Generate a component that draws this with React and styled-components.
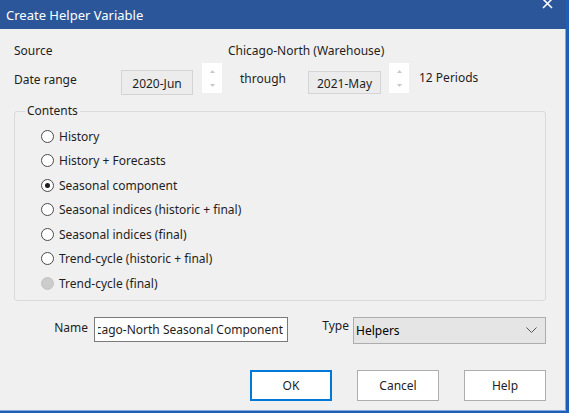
import React from "react";
import styled, { createGlobalStyle } from "styled-components";

const Global = createGlobalStyle`
  html, body { margin: 0; padding: 0; background: #f0f0f0; }
  body { font-family: "Noto Sans", "Open Sans", sans-serif; font-size: 12px; color: #1e1e1e; }
  * { box-sizing: border-box; }
`;

const Window = styled.div`
  width: 569px;
  height: 413px;
  background: #f0f0f0;
  display: flex;
  flex-direction: column;
  border-right: 3px solid #1f5fb6;
  border-bottom: 2px solid #1f5fb6;
  box-shadow: inset -1px -1px 0 #7fa9df;
  overflow: hidden;
`;

const TitleBar = styled.div`
  height: 29px;
  flex: none;
  background: #2b579a;
  color: #fff;
  display: flex;
  align-items: center;
  justify-content: space-between;
  padding: 0 16px 0 6px;
  margin-right: -3px;
  font-size: 13px;
`;

const CloseX = styled.svg`
  align-self: flex-start;
  margin-top: -1px;
`;

const Body = styled.div`
  flex: 1;
  padding: 14px 20px 0 14px;
  display: flex;
  flex-direction: column;
`;

const InfoRow = styled.div`
  display: flex;
  align-items: center;
  height: 16px;
  line-height: 16px;
`;

const Label = styled.span`
  width: ${p => p.$w || "auto"};
  flex: none;
  margin-top: ${p => p.$mt || "0px"};
  line-height: 16px;
`;

const DateRow = styled.div`
  display: flex;
  align-items: flex-start;
  margin-top: 4px;
  height: 32px;
`;

const DateBox = styled.div`
  margin-top: ${p => p.$mt};
  width: ${p => p.$w};
  height: ${p => p.$h};
  border: 1px solid #d4d4d4;
  background: #ececec;
  display: flex;
  align-items: center;
  justify-content: center;
  padding-top: 1px;
  flex: none;
`;

const Spinner = styled.div`
  width: 20px;
  height: 30px;
  margin-left: ${p => p.$ml};
  margin-right: ${p => p.$mr};
  background: #fff;
  display: flex;
  flex-direction: column;
  align-items: center;
  justify-content: space-between;
  padding: 7px 0 6px;
  flex: none;
`;

const Group = styled.fieldset`
  margin: 8px 0 0 0;
  padding: 5px 0 4px 26px;
  border: 1px solid #dadada;
  border-radius: 3px;
  min-width: 0;
`;

const Legend = styled.legend`
  margin-left: -16px;
  padding: 0 2px;
  line-height: 16px;
`;

const RadioRow = styled.div`
  height: 24.5px;
  display: flex;
  align-items: center;
  gap: 5px;
  color: #1e1e1e;
`;

const RadioCircle = styled.span`
  width: 13px;
  height: 13px;
  border-radius: 50%;
  border: 1px solid ${p => (p.$disabled ? "#c4c4c4" : "#4a4a4a")};
  background: ${p => (p.$disabled ? "#cccccc" : "#fff")};
  display: flex;
  align-items: center;
  justify-content: center;
  flex: none;
  &::after {
    content: "";
    width: 5px;
    height: 5px;
    border-radius: 50%;
    background: #1e1e1e;
    display: ${p => (p.$checked ? "block" : "none")};
  }
`;

const NameRow = styled.div`
  display: flex;
  align-items: flex-start;
  margin-top: 16px;
  height: 28px;
`;

const FieldLabel = styled.span`
  margin-top: ${p => p.$mt};
  width: ${p => p.$w};
  text-align: right;
  padding-right: ${p => p.$pr};
  flex: none;
  line-height: 16px;
`;

const TextInput = styled.div`
  width: 194px;
  height: 25px;
  border: 1px solid #7a7a7a;
  background: #fff;
  padding: 0 4px 0 3px;
  display: flex;
  flex: none;
`;

const InputClip = styled.div`
  flex: 1;
  min-width: 0;
  display: flex;
  align-items: center;
  justify-content: flex-end;
  white-space: nowrap;
  overflow: hidden;
`;

const InputText = styled.span`
  flex: none;
`;

const Select = styled.div`
  flex: 1;
  height: 27px;
  border: 1px solid #adadad;
  background: #e5e5e5;
  display: flex;
  align-items: center;
  justify-content: space-between;
  padding: 0 8px 0 2px;
  color: #000;
`;

const ButtonRow = styled.div`
  display: flex;
  justify-content: flex-end;
  gap: 25px;
  margin-top: 25px;
`;

const Button = styled.div`
  width: 82px;
  height: 31px;
  border: 1px solid ${p => (p.$primary ? "#0078d7" : "#adadad")};
  box-shadow: ${p => (p.$primary ? "inset 0 0 0 1px #0078d7" : "none")};
  background: #fff;
  display: flex;
  align-items: center;
  justify-content: center;
  color: #1e1e1e;
`;

const Arrow = ({ up }) => (
  <svg width="5" height="3" viewBox="0 0 5 3">
    <path d={up ? "M0 3 L2.5 0 L5 3 Z" : "M0 0 L2.5 3 L5 0 Z"} fill="#c8c8c8" />
  </svg>
);

const options = [
  { label: "History" },
  { label: "History + Forecasts" },
  { label: "Seasonal component", checked: true },
  { label: "Seasonal indices (historic + final)" },
  { label: "Seasonal indices (final)" },
  { label: "Trend-cycle (historic + final)" },
  { label: "Trend-cycle (final)", disabled: true },
];

export default function App() {
  return (
    <>
      <Global />
      <Window>
        <TitleBar>
          <span>Create Helper Variable</span>
          <CloseX width="11" height="10" viewBox="0 0 11 10">
            <path d="M1 0 L10 9 M10 0 L1 9" stroke="#fff" strokeWidth="1.6" />
          </CloseX>
        </TitleBar>
        <Body>
          <InfoRow>
            <Label $w="214px">Source</Label>
            <Label>Chicago-North (Warehouse)</Label>
          </InfoRow>
          <DateRow>
            <Label $w="107px" $mt="9px">Date range</Label>
            <DateBox $mt="7px" $w="72px" $h="25px">2020-Jun</DateBox>
            <Spinner $ml="9px" $mr="18px">
              <Arrow up />
              <Arrow />
            </Spinner>
            <Label $w="68px" $mt="8px">through</Label>
            <DateBox $mt="8px" $w="73px" $h="23px">2021-May</DateBox>
            <Spinner $ml="8px" $mr="10px">
              <Arrow up />
              <Arrow />
            </Spinner>
            <Label $mt="7px">12 Periods</Label>
          </DateRow>
          <Group>
            <Legend>Contents</Legend>
            {options.map(o => (
              <RadioRow key={o.label}>
                <RadioCircle $checked={o.checked} $disabled={o.disabled} />
                <span>{o.label}</span>
              </RadioRow>
            ))}
          </Group>
          <NameRow>
            <FieldLabel $w="80px" $pr="6px" $mt="3px">Name</FieldLabel>
            <TextInput>
              <InputClip>
                <InputText>Chicago-North Seasonal Component</InputText>
              </InputClip>
            </TextInput>
            <FieldLabel $w="65px" $pr="4px" $mt="1px">Type</FieldLabel>
            <Select>
              <span>Helpers</span>
              <svg width="11" height="7" viewBox="0 0 11 7">
                <path d="M0.5 0.5 L5.5 5.5 L10.5 0.5" stroke="#555" strokeWidth="1" fill="none" />
              </svg>
            </Select>
          </NameRow>
          <ButtonRow>
            <Button $primary>OK</Button>
            <Button>Cancel</Button>
            <Button>Help</Button>
          </ButtonRow>
        </Body>
      </Window>
    </>
  );
}
